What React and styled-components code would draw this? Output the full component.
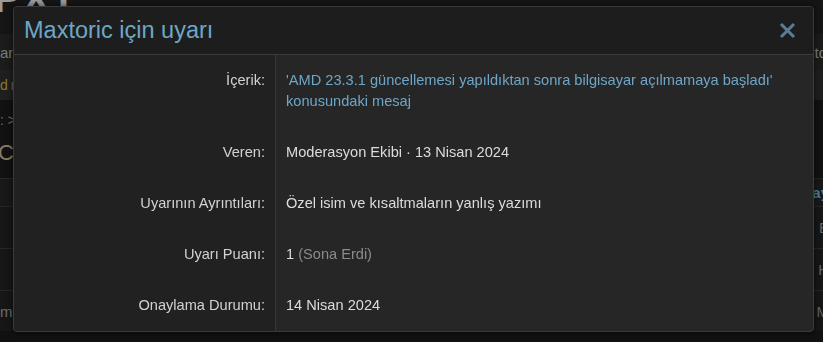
import React from 'react'
import styled, { createGlobalStyle } from 'styled-components'

const GlobalStyle = createGlobalStyle`
  html, body {
    margin: 0;
    padding: 0;
    background: #121212;
    overflow: hidden;
  }
  body {
    font-family: "Liberation Sans", Arial, sans-serif;
  }
`

/* ---------- the forum page behind the overlay ---------- */

const Page = styled.div`
  width: 823px;
  height: 342px;
  display: flex;
  flex-direction: column;
  background: #111111;
  color: #6d6d6d;
  font-size: 14px;
  overflow: hidden;
`
const LogoBar = styled.div`
  height: 34px;
  background: #151515;
  display: flex;
  align-items: flex-start;
`
const Logo = styled.div`
  font-size: 40px;
  font-weight: 700;
  line-height: 1;
  margin-top: -22px;
  margin-left: -6px;
  color: #9a9a9a;
  letter-spacing: 2px;
`
const NavBar = styled.div`
  height: 36px;
  background: #1b1b1b;
  display: flex;
  align-items: center;
  justify-content: space-between;
  font-size: 15px;
  color: #7b7b7b;
`
const NavEnd = styled.span`
  margin-right: -4px;
`
const SubBar = styled.div`
  height: 30px;
  background: #1f1f1f;
  display: flex;
  align-items: center;
  font-size: 14px;
  color: #6a6a6a;
`
const Gold = styled.span`
  color: #8c7a2e;
  margin-right: 3px;
`
const Crumbs = styled.div`
  height: 78px;
  display: flex;
  flex-direction: column;
  justify-content: space-around;
  padding: 6px 0;
  box-sizing: border-box;
  color: #6a6a6a;
`
const BigC = styled.span`
  font-size: 22px;
  color: #8a7a6a;
  margin-left: -2px;
`
const TableRow = styled.div`
  height: ${p => p.$h}px;
  border-top: 1px solid #262626;
  background: ${p => p.$bg || '#161616'};
  display: flex;
  align-items: center;
  justify-content: space-between;
  box-sizing: border-box;
  font-size: 15px;
`
const RightCell = styled.span`
  color: ${p => p.$blue ? '#4f7892' : '#616161'};
  font-weight: ${p => p.$blue ? 700 : 400};
  margin-right: -6px;
`

/* ---------- the dialog ---------- */

const Overlay = styled.div`
  position: fixed;
  inset: 0;
  display: flex;
  align-items: flex-start;
  justify-content: flex-start;
  padding: 6px 0 0 13px;
`
const Dialog = styled.div`
  width: 799px;
  background: #262626;
  border: 1px solid #3a3a3a;
  border-radius: 4px;
  overflow: hidden;
  box-shadow: 0 0 6px rgba(0, 0, 0, 0.6);
`
const Header = styled.div`
  height: 47px;
  display: flex;
  align-items: center;
  justify-content: space-between;
  padding: 0 17px 0 10px;
  background: #1d1d1d;
  border-bottom: 1px solid #3b3b3b;
`
const Title = styled.h2`
  margin: 0;
  font-size: 23.5px;
  font-weight: 400;
  color: #6ea6c7;
`
const Close = styled.button`
  background: none;
  border: 0;
  padding: 0;
  width: 17px;
  height: 17px;
  cursor: pointer;
  display: flex;
`
const Table = styled.div`
  display: grid;
  grid-template-columns: 262px 1fr;
`
const Label = styled.div`
  background: #212121;
  border-right: 1px solid #373737;
  padding: 15px 10px;
  text-align: right;
  font-size: 14.6px;
  line-height: 21px;
  color: #d2d2d2;
`
const Value = styled.div`
  padding: 15px 10px;
  font-size: 14.6px;
  line-height: 21px;
  color: #dcdcdc;
`
const Link = styled.a`
  color: #6ea6c7;
  text-decoration: none;
`
const Muted = styled.span`
  color: #8b8b8b;
`

const rows = [
  {
    label: 'İçerik:',
    value: (
      <Link href="#">'AMD 23.3.1 güncellemesi yapıldıktan sonra bilgisayar açılmamaya başladı' konusundaki mesaj</Link>
    ),
  },
  { label: 'Veren:', value: 'Moderasyon Ekibi · 13 Nisan 2024' },
  { label: 'Uyarının Ayrıntıları:', value: 'Özel isim ve kısaltmaların yanlış yazımı' },
  { label: 'Uyarı Puanı:', value: <>1 <Muted>(Sona Erdi)</Muted></> },
  { label: 'Onaylama Durumu:', value: '14 Nisan 2024' },
]

const App = () => (
  <>
    <GlobalStyle />
    <Page>
      <LogoBar>
        <Logo>PXT</Logo>
      </LogoBar>
      <NavBar>
        <span>an</span>
        <NavEnd>to</NavEnd>
      </NavBar>
      <SubBar>
        <Gold>d</Gold>m
      </SubBar>
      <Crumbs>
        <span>: &gt;</span>
        <BigC>C</BigC>
      </Crumbs>
      <TableRow $h={28} $bg="#181818">
        <span />
        <RightCell $blue>ay</RightCell>
      </TableRow>
      <TableRow $h={42}>
        <span />
        <RightCell>E</RightCell>
      </TableRow>
      <TableRow $h={42}>
        <span />
        <RightCell>H</RightCell>
      </TableRow>
      <TableRow $h={41}>
        <span>m</span>
        <RightCell>M</RightCell>
      </TableRow>
    </Page>
    <Overlay>
      <Dialog>
        <Header>
          <Title>Maxtoric için uyarı</Title>
          <Close aria-label="Kapat">
            <svg width="17" height="17" viewBox="0 0 17 17">
              <path d="M2 2 L15 15 M15 2 L2 15" stroke="#587e95" strokeWidth="3" strokeLinecap="butt" />
            </svg>
          </Close>
        </Header>
        <Table>
          {rows.map((r, i) => (
            <React.Fragment key={i}>
              <Label>{r.label}</Label>
              <Value>{r.value}</Value>
            </React.Fragment>
          ))}
        </Table>
      </Dialog>
    </Overlay>
  </>
)

export default App
